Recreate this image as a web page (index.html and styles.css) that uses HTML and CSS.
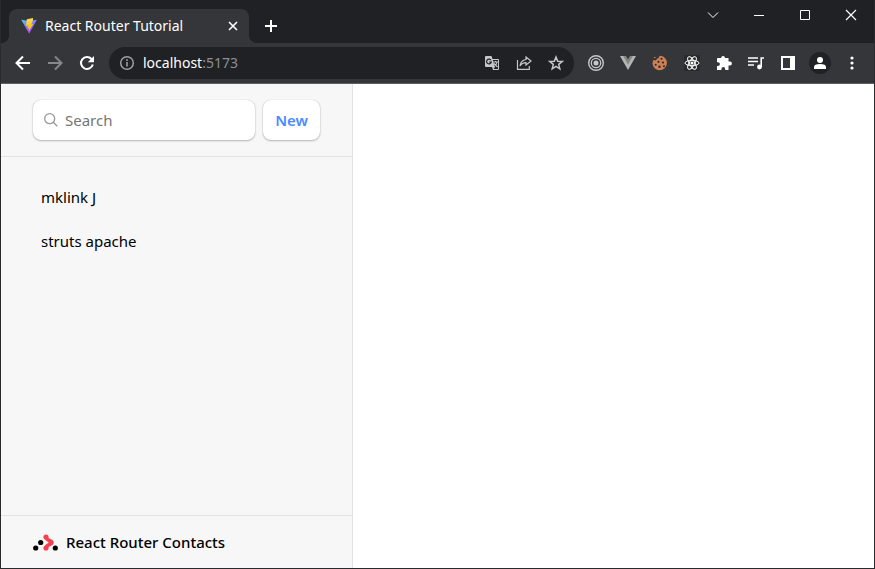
FILE: index.html
```html
<!DOCTYPE html>
<html lang="en">
<head>
<meta charset="utf-8">
<meta name="viewport" content="width=device-width, initial-scale=1">
<title>React Router Tutorial</title>
<link rel="stylesheet" href="styles.css">
</head>
<body>
<div class="window">
  <header class="tabstrip">
    <div class="tab">
      <svg class="icon" viewBox="0 0 16 16" aria-hidden="true">
        <defs>
          <linearGradient id="vee" x1="0" y1="0" x2=".6" y2="1"><stop offset="0" stop-color="#41d1ff"/><stop offset="1" stop-color="#bd34fe"/></linearGradient>
          <linearGradient id="bolt" x1="0" y1="0" x2="0" y2="1"><stop offset="0" stop-color="#ffdf50"/><stop offset="1" stop-color="#ffb000"/></linearGradient>
        </defs>
        <path fill="url(#vee)" d="M.2 1.700 8 3l7.800-1.300L8.200 15.800Z"/>
        <path fill="url(#bolt)" d="M12 0 5.800 1.200 5 8l2.200-.4-.7 3 1.600-.4-.4 3.300 4.600-7.500-2 .4L12 2Z"/>
      </svg>
      <span class="tab-title">React Router Tutorial</span>
      <button class="plain" aria-label="Close tab"><svg class="icon" viewBox="0 0 16 16"><path class="stroke" stroke-width="1.600" d="m4 4 8 8m0-8-8 8"/></svg></button>
    </div>
    <button class="plain new-tab" aria-label="New tab"><svg class="icon" viewBox="0 0 16 16"><path class="stroke" stroke-width="2" d="M8 2v12M2 8h12"/></svg></button>
    <div class="controls">
      <button class="plain" aria-label="Search tabs"><svg class="icon" viewBox="0 0 16 16"><path class="stroke" d="m3 5.500 5 5 5-5"/></svg></button>
      <button class="plain" aria-label="Minimize"><svg class="icon" viewBox="0 0 16 16"><path class="stroke" d="M3 8.500h10"/></svg></button>
      <button class="plain" aria-label="Maximize"><svg class="icon" viewBox="0 0 16 16"><path class="stroke" d="M3.500 3.500h9v9h-9Z"/></svg></button>
      <button class="plain" aria-label="Close window"><svg class="icon" viewBox="0 0 16 16"><path class="stroke" stroke-width="1.200" d="m3 3 10 10m0-10L3 13"/></svg></button>
    </div>
  </header>

  <nav class="toolbar" aria-label="Browser">
    <button class="plain tool" aria-label="Back"><svg class="icon" viewBox="0 0 16 16"><path class="stroke" stroke-width="2" d="M15 8H2.500M8 1.500 1.500 8 8 14.500"/></svg></button>
    <button class="plain tool dim" aria-label="Forward"><svg class="icon" viewBox="0 0 16 16"><path class="stroke" stroke-width="2" d="M1 8h12.500M8 1.500 14.500 8 8 14.500"/></svg></button>
    <button class="plain tool" aria-label="Reload"><svg class="icon" viewBox="0 0 16 16"><path class="stroke" stroke-width="2" d="M13.800 9.500A6 6 0 1 1 12.500 4"/><path fill="currentColor" d="M15 1v6.200H8.800Z"/></svg></button>
    <div class="omnibox">
      <svg class="icon muted" viewBox="0 0 16 16" aria-hidden="true"><circle class="stroke" stroke-width="1.500" cx="8" cy="8" r="6.300"/><path fill="currentColor" d="M7.200 7h1.600v4.500H7.200zm0-2.700h1.600v1.600H7.200z"/></svg>
      <a class="address" href="#">localhost<span class="port">:5173</span></a>
      <button class="plain tool soft" aria-label="Translate"><svg class="icon" viewBox="0 0 16 16"><path fill="currentColor" d="M2 1h5.500l1 3H14q1 0 1 1v9q0 1-1 1H9l-1-3H2q-1 0-1-1V2q0-1 1-1Z"/><path fill="none" stroke="#202124" stroke-width="1.200" d="M7 5.200a2.400 2.400 0 1 0 .3 1.800H5.200"/><path fill="#202124" d="M8.800 5H14v9H9.700l1.200-2Z"/><path class="stroke" stroke-width="1.100" d="M9.200 7H14m-2.500-1v1m1.500 0q-.5 3-3 4.500m0-3 3.500 3.500"/></svg></button>
      <button class="plain tool soft" aria-label="Share"><svg class="icon" viewBox="0 0 16 16"><path class="stroke" stroke-width="1.200" d="M1.500 5v9.400h11.800V11M10 2l5 4-5 4V7.700Q6 7.700 4 11q.5-5.500 6-6.500Z"/></svg></button>
      <button class="plain tool soft" aria-label="Bookmark"><svg class="icon" viewBox="0 0 16 16"><path class="stroke" stroke-width="1.500" d="m8 2 1.700 4.200 4.500.3-3.500 2.900 1.100 4.400L8 11.400l-3.800 2.400 1.100-4.400-3.500-2.900 4.500-.3Z"/></svg></button>
    </div>
    <button class="plain tool soft" aria-label="Target extension"><svg class="icon" viewBox="0 0 16 16"><circle class="stroke" stroke-width="1.400" cx="8" cy="8" r="7.300"/><circle class="stroke" stroke-width="1.300" cx="8" cy="8" r="4.700"/><circle fill="currentColor" cx="8" cy="8" r="2.500"/></svg></button>
    <button class="plain tool" aria-label="Vue extension"><svg class="icon" viewBox="0 0 16 16"><path fill="#b5b5b5" d="M0 1h4l4 7 4-7h4L8 15Z"/><path fill="#858585" d="M3.200 1H6l2 3.500L10 1h2.800L8 9.500Z"/></svg></button>
    <button class="plain tool" aria-label="Cookie extension"><svg class="icon" viewBox="0 0 16 16"><path fill="#ce8055" d="M8.500.8a7.200 7.200 0 1 1-8 7.500Q.6 6.500 1.500 5q2 1 3-.5T6.700 3Q6.500 1.200 8.500.8Z"/><path fill="#ce8055" d="M2 2h1.500v1H2z"/><g fill="#292a2d"><circle cx="9.500" cy="3.800" r="1"/><circle cx="6.500" cy="6.800" r="1.100"/><circle cx="11" cy="7.500" r="1.100"/><circle cx="3.700" cy="9.800" r="1"/><circle cx="7.500" cy="11.700" r="1.200"/><circle cx="12" cy="11.200" r="1"/></g></svg></button>
    <button class="plain tool" aria-label="React extension"><svg class="icon" viewBox="0 0 16 16"><path fill="#292a2d" d="M0 0h16v16H0z"/><g class="stroke"><ellipse cx="8" cy="8" rx="7" ry="2.700"/><ellipse cx="8" cy="8" rx="7" ry="2.700" transform="rotate(60 8 8)"/><ellipse cx="8" cy="8" rx="7" ry="2.700" transform="rotate(120 8 8)"/></g><circle fill="currentColor" cx="8" cy="8" r="1.500"/></svg></button>
    <button class="plain tool" aria-label="Extensions"><svg class="icon" viewBox="0 0 16 16"><path fill="currentColor" d="M2 3h3.200a1.900 1.900 0 0 1 3.800 0h3.500v3.600H14a1.900 1.900 0 0 1 0 3.800h-1.500V15H9.200v-1a1.900 1.900 0 0 0-3.800 0v1H1v-4h1a1.900 1.900 0 0 0 0-3.800H1V4q0-1 1-1Z"/></svg></button>
    <button class="plain tool" aria-label="Media controls"><svg class="icon" viewBox="0 0 16 16"><path class="stroke" stroke-width="1.600" d="M0 3h10M0 6.500h10M0 10h6m7.200 2V3H16"/><circle fill="currentColor" cx="11.500" cy="12" r="2.400"/></svg></button>
    <button class="plain tool" aria-label="Side panel"><svg class="icon" viewBox="0 0 16 16"><path fill="currentColor" fill-rule="evenodd" d="M1 1h14v14H1Zm2 2v10h7V3Z"/></svg></button>
    <button class="plain tool" aria-label="Profile"><svg class="avatar" viewBox="0 0 22 22"><circle fill="#202124" cx="11" cy="11" r="11"/><circle fill="currentColor" cx="11" cy="8" r="3"/><path fill="currentColor" d="M5 17v-2q0-3 6-3t6 3v2Z"/></svg></button>
    <button class="plain tool" aria-label="Menu"><svg class="icon" viewBox="0 0 16 16"><g fill="currentColor"><circle cx="8" cy="3" r="1.600"/><circle cx="8" cy="8" r="1.600"/><circle cx="8" cy="13" r="1.600"/></g></svg></button>
  </nav>

  <div class="page">
    <aside class="sidebar">
      <form class="search-row" role="search">
        <label class="search">
          <svg class="icon" viewBox="0 0 16 16" aria-hidden="true"><circle class="stroke" stroke-width="1.300" cx="6.700" cy="6.700" r="5"/><path class="stroke" stroke-width="1.300" d="m10.300 10.300 4 4"/></svg>
          <input type="search" aria-label="Search contacts" placeholder="Search">
        </label>
        <button class="new" type="button">New</button>
      </form>
      <nav class="contacts" aria-label="Contacts">
        <a href="#">mklink J</a>
        <a href="#">struts apache</a>
      </nav>
      <h1 class="brand">
        <svg class="logo" viewBox="0 0 25 17" aria-hidden="true"><path fill="none" stroke="#f44250" stroke-width="3.600" stroke-linecap="round" stroke-linejoin="round" d="M13 3q.5 2.500 3 3.300 2.500.7 2.500 2.200t-2.500 2.200Q13.500 11.500 13 14"/><g fill="#f44250"><circle cx="13" cy="3" r="2.600"/><circle cx="18" cy="8.500" r="2.600"/><circle cx="13" cy="14" r="2.600"/></g><circle cx="7.700" cy="8.500" r="2.600"/><circle cx="2.700" cy="14" r="2.600"/><circle cx="22.300" cy="14" r="2.600"/></svg>
        React Router Contacts
      </h1>
    </aside>
    <main class="detail"></main>
  </div>
</div>
</body>
</html>
```
FILE: styles.css
```css
* {
  box-sizing: border-box;
}

body {
  margin: 0;
  font: 15px/20px "Noto Sans", "Open Sans", sans-serif;
  color: #000;
}

.window {
  display: flex;
  flex-direction: column;
  min-height: 100vh;
  border: 1px solid #292a2d;
  border-top: 0;
  background: #fff;
}

.icon {
  display: block;
  flex: none;
  width: 16px;
  height: 16px;
}

.stroke {
  fill: none;
  stroke: currentColor;
}

.plain {
  display: flex;
  align-items: center;
  justify-content: center;
  padding: 0;
  border: 0;
  background: none;
  color: #fff;
}

.tabstrip {
  display: flex;
  height: 43px;
  padding-left: 8px;
  background: #202124;
}

.tab {
  position: relative;
  display: flex;
  align-items: center;
  gap: 8px;
  width: 240px;
  margin-top: 9px;
  padding: 0 8px 0 12px;
  border-radius: 8px 8px 0 0;
  background: #35363a;
  color: #fff;
}

.tab::before,
.tab::after {
  content: "";
  position: absolute;
  bottom: 0;
  width: 8px;
  height: 8px;
}

.tab::before {
  right: 100%;
  background: radial-gradient(circle at 0 0, #202124 8px, #35363a 8px);
}

.tab::after {
  left: 100%;
  background: radial-gradient(circle at 100% 0, #202124 8px, #35363a 8px);
}

.tab-title {
  flex: 1;
  font-size: 14px;
  white-space: nowrap;
}

.new-tab {
  width: 28px;
  margin: 9px 0 0 8px;
}

.controls {
  display: flex;
  height: 30px;
  margin-left: auto;
}

.controls .plain {
  width: 46px;
}

.toolbar {
  display: flex;
  align-items: center;
  height: 41px;
  padding: 0 6px;
  border-bottom: 1px solid #5f6062;
  background: #35363a;
}

.tool {
  flex: none;
  width: 32px;
  height: 32px;
}

.dim {
  color: #86878a;
}

.soft {
  color: #c6c7ca;
}

.muted {
  color: #9aa0a6;
}

.omnibox {
  display: flex;
  flex: 1;
  align-items: center;
  height: 32px;
  margin: 0 6px;
  padding: 0 2px 0 10px;
  border-radius: 16px;
  background: #202124;
  font-size: 14px;
}

.address {
  flex: 1;
  margin-left: 8px;
  color: #fff;
  text-decoration: none;
}

.port {
  color: #8b8f94;
}

.avatar {
  width: 22px;
  height: 22px;
}

.page {
  display: flex;
  flex: 1;
}

.sidebar {
  display: flex;
  flex: none;
  flex-direction: column;
  width: 352px;
  border-right: 1px solid #e3e3e3;
  background: #f7f7f7;
}

.search-row {
  display: flex;
  gap: 8px;
  padding: 16px 32px;
  border-bottom: 1px solid #e3e3e3;
}

.search,
.new {
  height: 40px;
  border-radius: 8px;
  background: #fff;
  box-shadow: 0 0 1px rgba(0, 0, 0, 0.25), 0 1px 2px rgba(0, 0, 0, 0.25);
}

.search {
  display: flex;
  flex: 1;
  align-items: center;
  gap: 6px;
  min-width: 0;
  padding: 0 10px;
  color: #999;
}

.search input {
  flex: 1;
  min-width: 0;
  padding: 0;
  border: 0;
  outline: 0;
  background: none;
  font: inherit;
}

.search input::placeholder {
  color: #757575;
}

.new {
  padding: 0 12px;
  border: 0;
  color: #4a8cff;
  font: inherit;
  font-weight: 600;
}

.contacts {
  display: flex;
  flex: 1;
  flex-direction: column;
  gap: 4px;
  padding: 20px 32px;
}

.contacts a {
  padding: 10px 8px;
  border-radius: 8px;
  color: inherit;
  text-decoration: none;
}

.brand {
  display: flex;
  align-items: center;
  gap: 8px;
  margin: 0;
  padding: 16px 32px;
  border-top: 1px solid #e3e3e3;
  font-size: 15px;
  font-weight: 500;
}

.logo {
  width: 25px;
  height: 17px;
}

.detail {
  flex: 1;
}
```
